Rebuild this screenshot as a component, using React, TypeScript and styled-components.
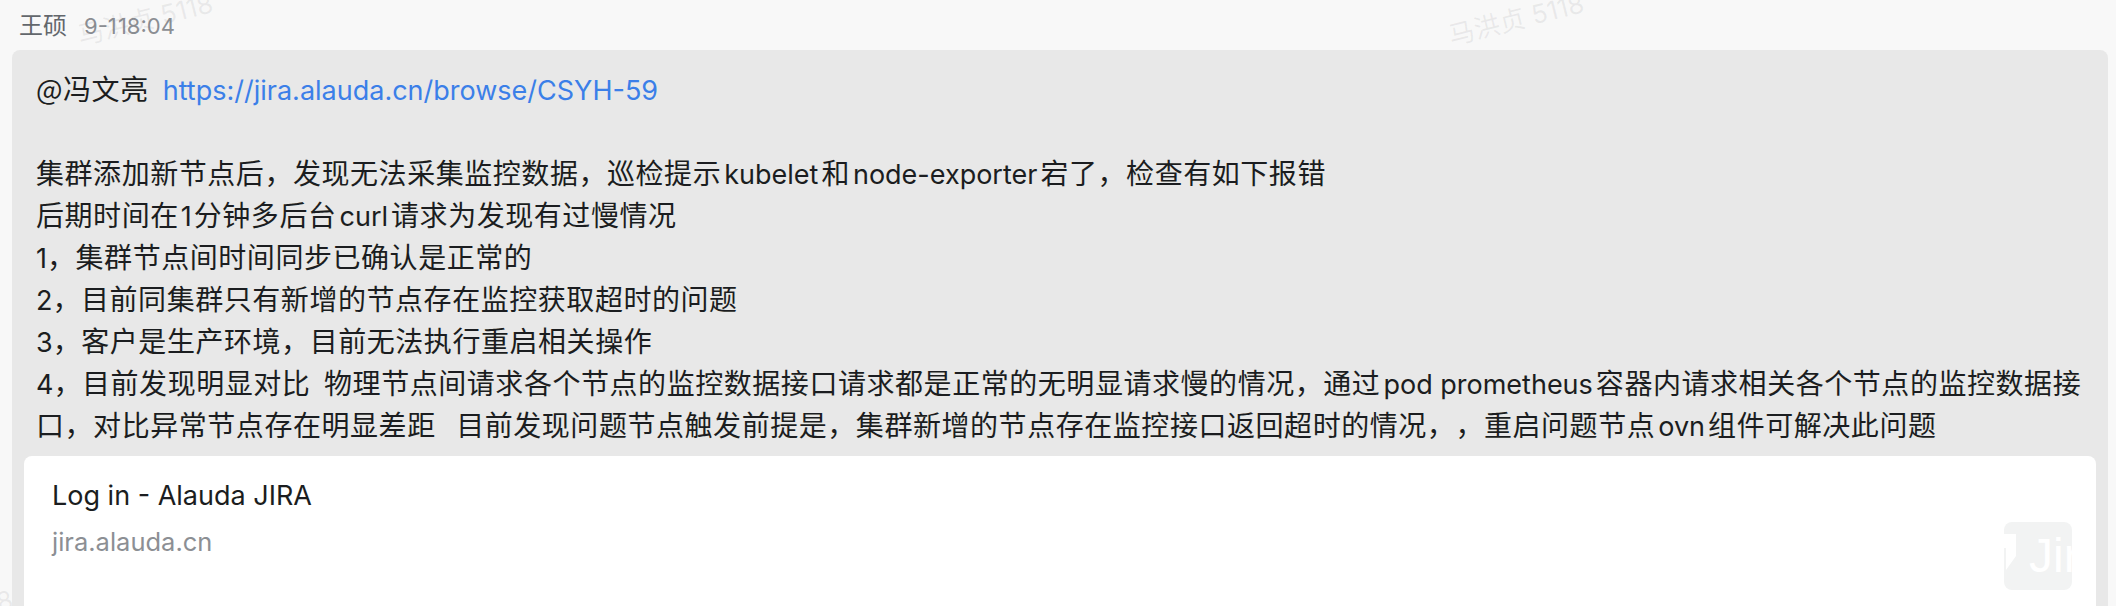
import React from 'react';
import styled, { createGlobalStyle } from 'styled-components';

const GlobalStyle = createGlobalStyle`
  html, body {
    margin: 0;
    padding: 0;
    width: 2116px;
    height: 606px;
    overflow: hidden;
    background: #f8f8f8;
  }
`;

const Page = styled.div`
  position: relative;
  width: 2116px;
  height: 606px;
  overflow: hidden;
  padding: 0 8px 0 12px;
  box-sizing: border-box;
  background: #f8f8f8;
  font-family: Inter, 'Noto Sans CJK SC', sans-serif;
`;

const Header = styled.div`
  display: flex;
  align-items: baseline;
  gap: 17px;
  height: 50px;
  padding: 9px 0 0 7px;
  box-sizing: border-box;
`;

const Sender = styled.span`
  font-size: 24px;
  line-height: 30px;
  color: #63676c;
  font-family: 'Noto Sans CJK SC', sans-serif;
`;

const Time = styled.span`
  font-size: 22px;
  line-height: 30px;
  color: #8b8e93;
  word-spacing: -5px;
`;

const Bubble = styled.div`
  position: relative;
  height: 556px;
  padding: 0 12px;
  box-sizing: border-box;
  background: #e8e8e8;
  border-radius: 8px 8px 0 0;
`;

const Message = styled.div`
  padding: 17px 12px 0;
  height: 406px;
  box-sizing: border-box;
  font-size: 28px;
  line-height: 42px;
  letter-spacing: 0.55px;
  color: #1b1d20;
  font-family: 'Noto Sans CJK SC', sans-serif;
  text-autospace: no-autospace;
  text-spacing-trim: space-all;
`;

const Line = styled.div`
  height: 42px;
  overflow: visible;
  white-space: pre;
`;

const Link = styled.a`
  margin-left: 14px;
  color: #3b7fe8;
  font-family: Inter, sans-serif;
  font-size: 27px;
  letter-spacing: 0;
  text-decoration: none;
`;

const Latin = styled.span<{ $gap: number }>`
  font-family: Inter, sans-serif;
  font-size: 27px;
  letter-spacing: 0;
  margin: 0 ${(p) => p.$gap}px;
`;

const Card = styled.div`
  position: relative;
  height: 150px;
  padding: 21px 20px 0 28px;
  box-sizing: border-box;
  background: #ffffff;
  border-radius: 8px 8px 0 0;
`;

const CardTitle = styled.div`
  font-size: 27px;
  line-height: 38px;
  color: #1b1d20;
`;

const CardHost = styled.div`
  margin-top: 11px;
  font-size: 25.5px;
  line-height: 32px;
  color: #8c8f94;
`;

const Thumb = styled.div`
  position: absolute;
  top: 66px;
  right: 24px;
  width: 68px;
  height: 68px;
  overflow: hidden;
  background: #f2f3f3;
  border-radius: 8px;
`;

const ThumbText = styled.span`
  position: absolute;
  left: 25px;
  top: 6px;
  font-family: 'Liberation Sans', sans-serif;
  font-size: 48px;
  line-height: 56px;
  color: #ffffff;
`;

const ThumbLogo = styled.svg`
  position: absolute;
  left: -12px;
  top: 12px;
  width: 28px;
  height: 36px;
`;

const Watermark = styled.span<{ $x: number; $y: number }>`
  position: absolute;
  left: ${(p) => p.$x}px;
  top: ${(p) => p.$y}px;
  font-size: 26px;
  line-height: 32px;
  white-space: nowrap;
  color: rgba(120, 125, 130, 0.12);
  transform: rotate(-14deg);
  transform-origin: left bottom;
  pointer-events: none;
`;

// odd entries are the latin runs, they get their own font and a small gap
const lines = [
  ['集群添加新节点后，发现无法采集监控数据，巡检提示', 'kubelet', '和', 'node-exporter', '宕了，检查有如下报错'],
  ['后期时间在', '1', '分钟多后台', 'curl', '请求为发现有过慢情况'],
  ['', '1', '，集群节点间时间同步已确认是正常的'],
  ['', '2', '，目前同集群只有新增的节点存在监控获取超时的问题'],
  ['', '3', '，客户是生产环境，目前无法执行重启相关操作'],
  ['', '4', '，目前发现明显对比  物理节点间请求各个节点的监控数据接口请求都是正常的无明显请求慢的情况，通过', 'pod prometheus', '容器内请求相关各个节点的监控数据接'],
  ['口，对比异常节点存在明显差距   目前发现问题节点触发前提是，集群新增的节点存在监控接口返回超时的情况，，重启问题节点', 'ovn', '组件可解决此问题'],
];

const App: React.FC = () => {
  return (
    <Page>
      <GlobalStyle />
      <Watermark $x={82} $y={20}>马洪贞 5118</Watermark>
      <Watermark $x={1453} $y={20}>马洪贞 5118</Watermark>
      <Watermark $x={-118} $y={616}>马洪贞 5118</Watermark>
      <Header>
        <Sender>王硕</Sender>
        <Time>9-1 18:04</Time>
      </Header>
      <Bubble>
        <Message>
          <Line>
            @冯文亮<Link>https://jira.alauda.cn/browse/CSYH-59</Link>
          </Line>
          <Line />
          {lines.map((parts, i) => (
            <Line key={i}>
              {parts.map((part, j) =>
                j % 2 === 1 ? (
                  <Latin key={j} $gap={/^\d$/.test(part) ? (j === 1 && parts[0] === '' ? 0 : 2) : 3}>
                    {part}
                  </Latin>
                ) : (
                  part
                )
              )}
            </Line>
          ))}
        </Message>
        <Card>
          <CardTitle>Log in - Alauda JIRA</CardTitle>
          <CardHost>jira.alauda.cn</CardHost>
          <Thumb>
            <ThumbLogo viewBox="0 0 28 36">
              <path d="M0 0h24v22L14 36V14H0z" fill="#ffffff" />
            </ThumbLogo>
            <ThumbText>Jira</ThumbText>
          </Thumb>
        </Card>
      </Bubble>
    </Page>
  );
};

export default App;
